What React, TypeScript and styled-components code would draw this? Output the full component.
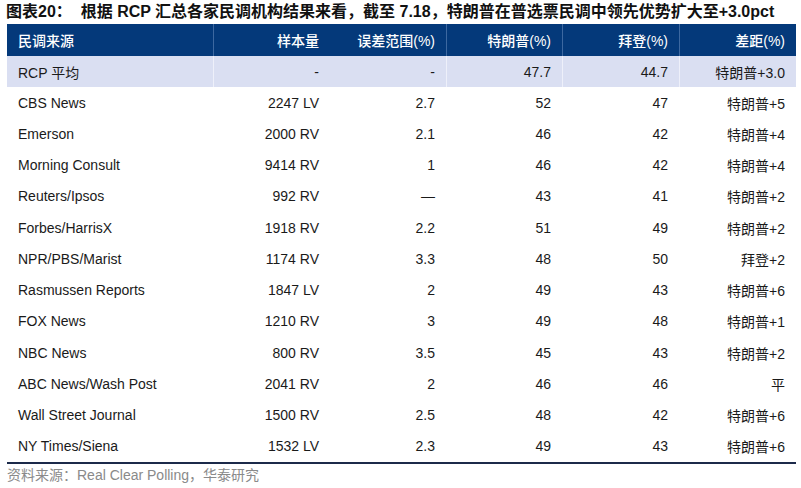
import styled, { createGlobalStyle } from 'styled-components';

const GlobalStyle = createGlobalStyle`
  html, body {
    margin: 0;
    padding: 0;
    background: #ffffff;
  }
  body {
    font-family: 'Liberation Sans', 'Noto Sans CJK SC', sans-serif;
  }
`;

const StyledPage = styled.div`
  width: 801px;
  height: 488px;
  padding: 2px 5px 0 7px;
  box-sizing: border-box;
  display: flex;
  flex-flow: column;
`;

const StyledTitle = styled.div`
  font-family: 'Liberation Sans', 'Noto Sans CJK SC', sans-serif;
  font-weight: bold;
  font-size: 16px;
  line-height: 20px;
  color: #111;
  height: 22px;
  white-space: nowrap;
  margin-left: -1px;
`;

const StyledTable = styled.div`
  width: 789px;
  display: grid;
  grid-template-columns: 206px 117px 116px 116px 117px 117px;
  border-bottom: solid 2px #1c2a4a;
`;

interface RowProps {
  variant?: 'header' | 'highlight' | 'plain';
}

const StyledRow = styled.div<RowProps>`
  display: contents;
  & > div {
    height: ${({ variant }) =>
      variant === 'header' ? '32px' : variant === 'highlight' ? '31px' : '31.25px'};
    background-color: ${({ variant }) =>
      variant === 'header' ? '#04397a' : variant === 'highlight' ? '#dadff2' : '#ffffff'};
    color: ${({ variant }) => (variant === 'header' ? '#ffffff' : '#1a1a1a')};
    border-left: ${({ variant }) =>
      variant === 'header'
        ? 'solid 1px #3d68a0'
        : variant === 'highlight'
        ? 'solid 1px #eef0fa'
        : 'none'};
  }
`;

interface CellProps {
  align?: 'left' | 'right';
  hideLine?: boolean;
}

const StyledCell = styled.div<CellProps>`
  display: flex;
  align-items: center;
  justify-content: ${({ align }) => (align === 'left' ? 'flex-start' : 'flex-end')};
  padding: 0 11px;
  box-sizing: border-box;
  font-size: 14px;
  white-space: nowrap;
  &:first-child {
    border-left: none !important;
  }
  ${({ hideLine }) => (hideLine ? 'border-left: none !important;' : '')}
`;

const StyledHeadText = styled.span`
  font-family: 'Liberation Sans', 'Noto Sans CJK SC', sans-serif;
  font-size: 14px;
  font-weight: 500;
`;

const StyledFooter = styled.div`
  margin-top: 1px;
  font-size: 14px;
  line-height: 20px;
  color: #8a8a8a;
  white-space: nowrap;
`;

const rows = [
  ['CBS News', '2247 LV', '2.7', '52', '47', '特朗普+5'],
  ['Emerson', '2000 RV', '2.1', '46', '42', '特朗普+4'],
  ['Morning Consult', '9414 RV', '1', '46', '42', '特朗普+4'],
  ['Reuters/Ipsos', '992 RV', '—', '43', '41', '特朗普+2'],
  ['Forbes/HarrisX', '1918 RV', '2.2', '51', '49', '特朗普+2'],
  ['NPR/PBS/Marist', '1174 RV', '3.3', '48', '50', '拜登+2'],
  ['Rasmussen Reports', '1847 LV', '2', '49', '43', '特朗普+6'],
  ['FOX News', '1210 RV', '3', '49', '48', '特朗普+1'],
  ['NBC News', '800 RV', '3.5', '45', '43', '特朗普+2'],
  ['ABC News/Wash Post', '2041 RV', '2', '46', '46', '平'],
  ['Wall Street Journal', '1500 RV', '2.5', '48', '42', '特朗普+6'],
  ['NY Times/Siena', '1532 LV', '2.3', '49', '43', '特朗普+6'],
];

const headers = ['民调来源', '样本量', '误差范围(%)', '特朗普(%)', '拜登(%)', '差距(%)'];

const App = () => {
  return (
    <StyledPage>
      <GlobalStyle />
      <StyledTitle>
        图表20：&nbsp;&nbsp;根据 RCP 汇总各家民调机构结果来看，截至 7.18，特朗普在普选票民调中领先优势扩大至+3.0pct
      </StyledTitle>
      <StyledTable>
        <StyledRow variant="header">
          {headers.map((h, i) => (
            <StyledCell key={h} align={i === 0 ? 'left' : 'right'} hideLine={i === 2}>
              <StyledHeadText>{h}</StyledHeadText>
            </StyledCell>
          ))}
        </StyledRow>
        <StyledRow variant="highlight">
          {['RCP 平均', '-', '-', '47.7', '44.7', '特朗普+3.0'].map((v, i) => (
            <StyledCell key={i} align={i === 0 ? 'left' : 'right'} hideLine={i === 2}>
              {v}
            </StyledCell>
          ))}
        </StyledRow>
        {rows.map(row => (
          <StyledRow key={row[0]} variant="plain">
            {row.map((v, i) => (
              <StyledCell key={i} align={i === 0 ? 'left' : 'right'}>
                {v}
              </StyledCell>
            ))}
          </StyledRow>
        ))}
      </StyledTable>
      <StyledFooter>资料来源：Real Clear Polling，华泰研究</StyledFooter>
    </StyledPage>
  );
};

export default App;
